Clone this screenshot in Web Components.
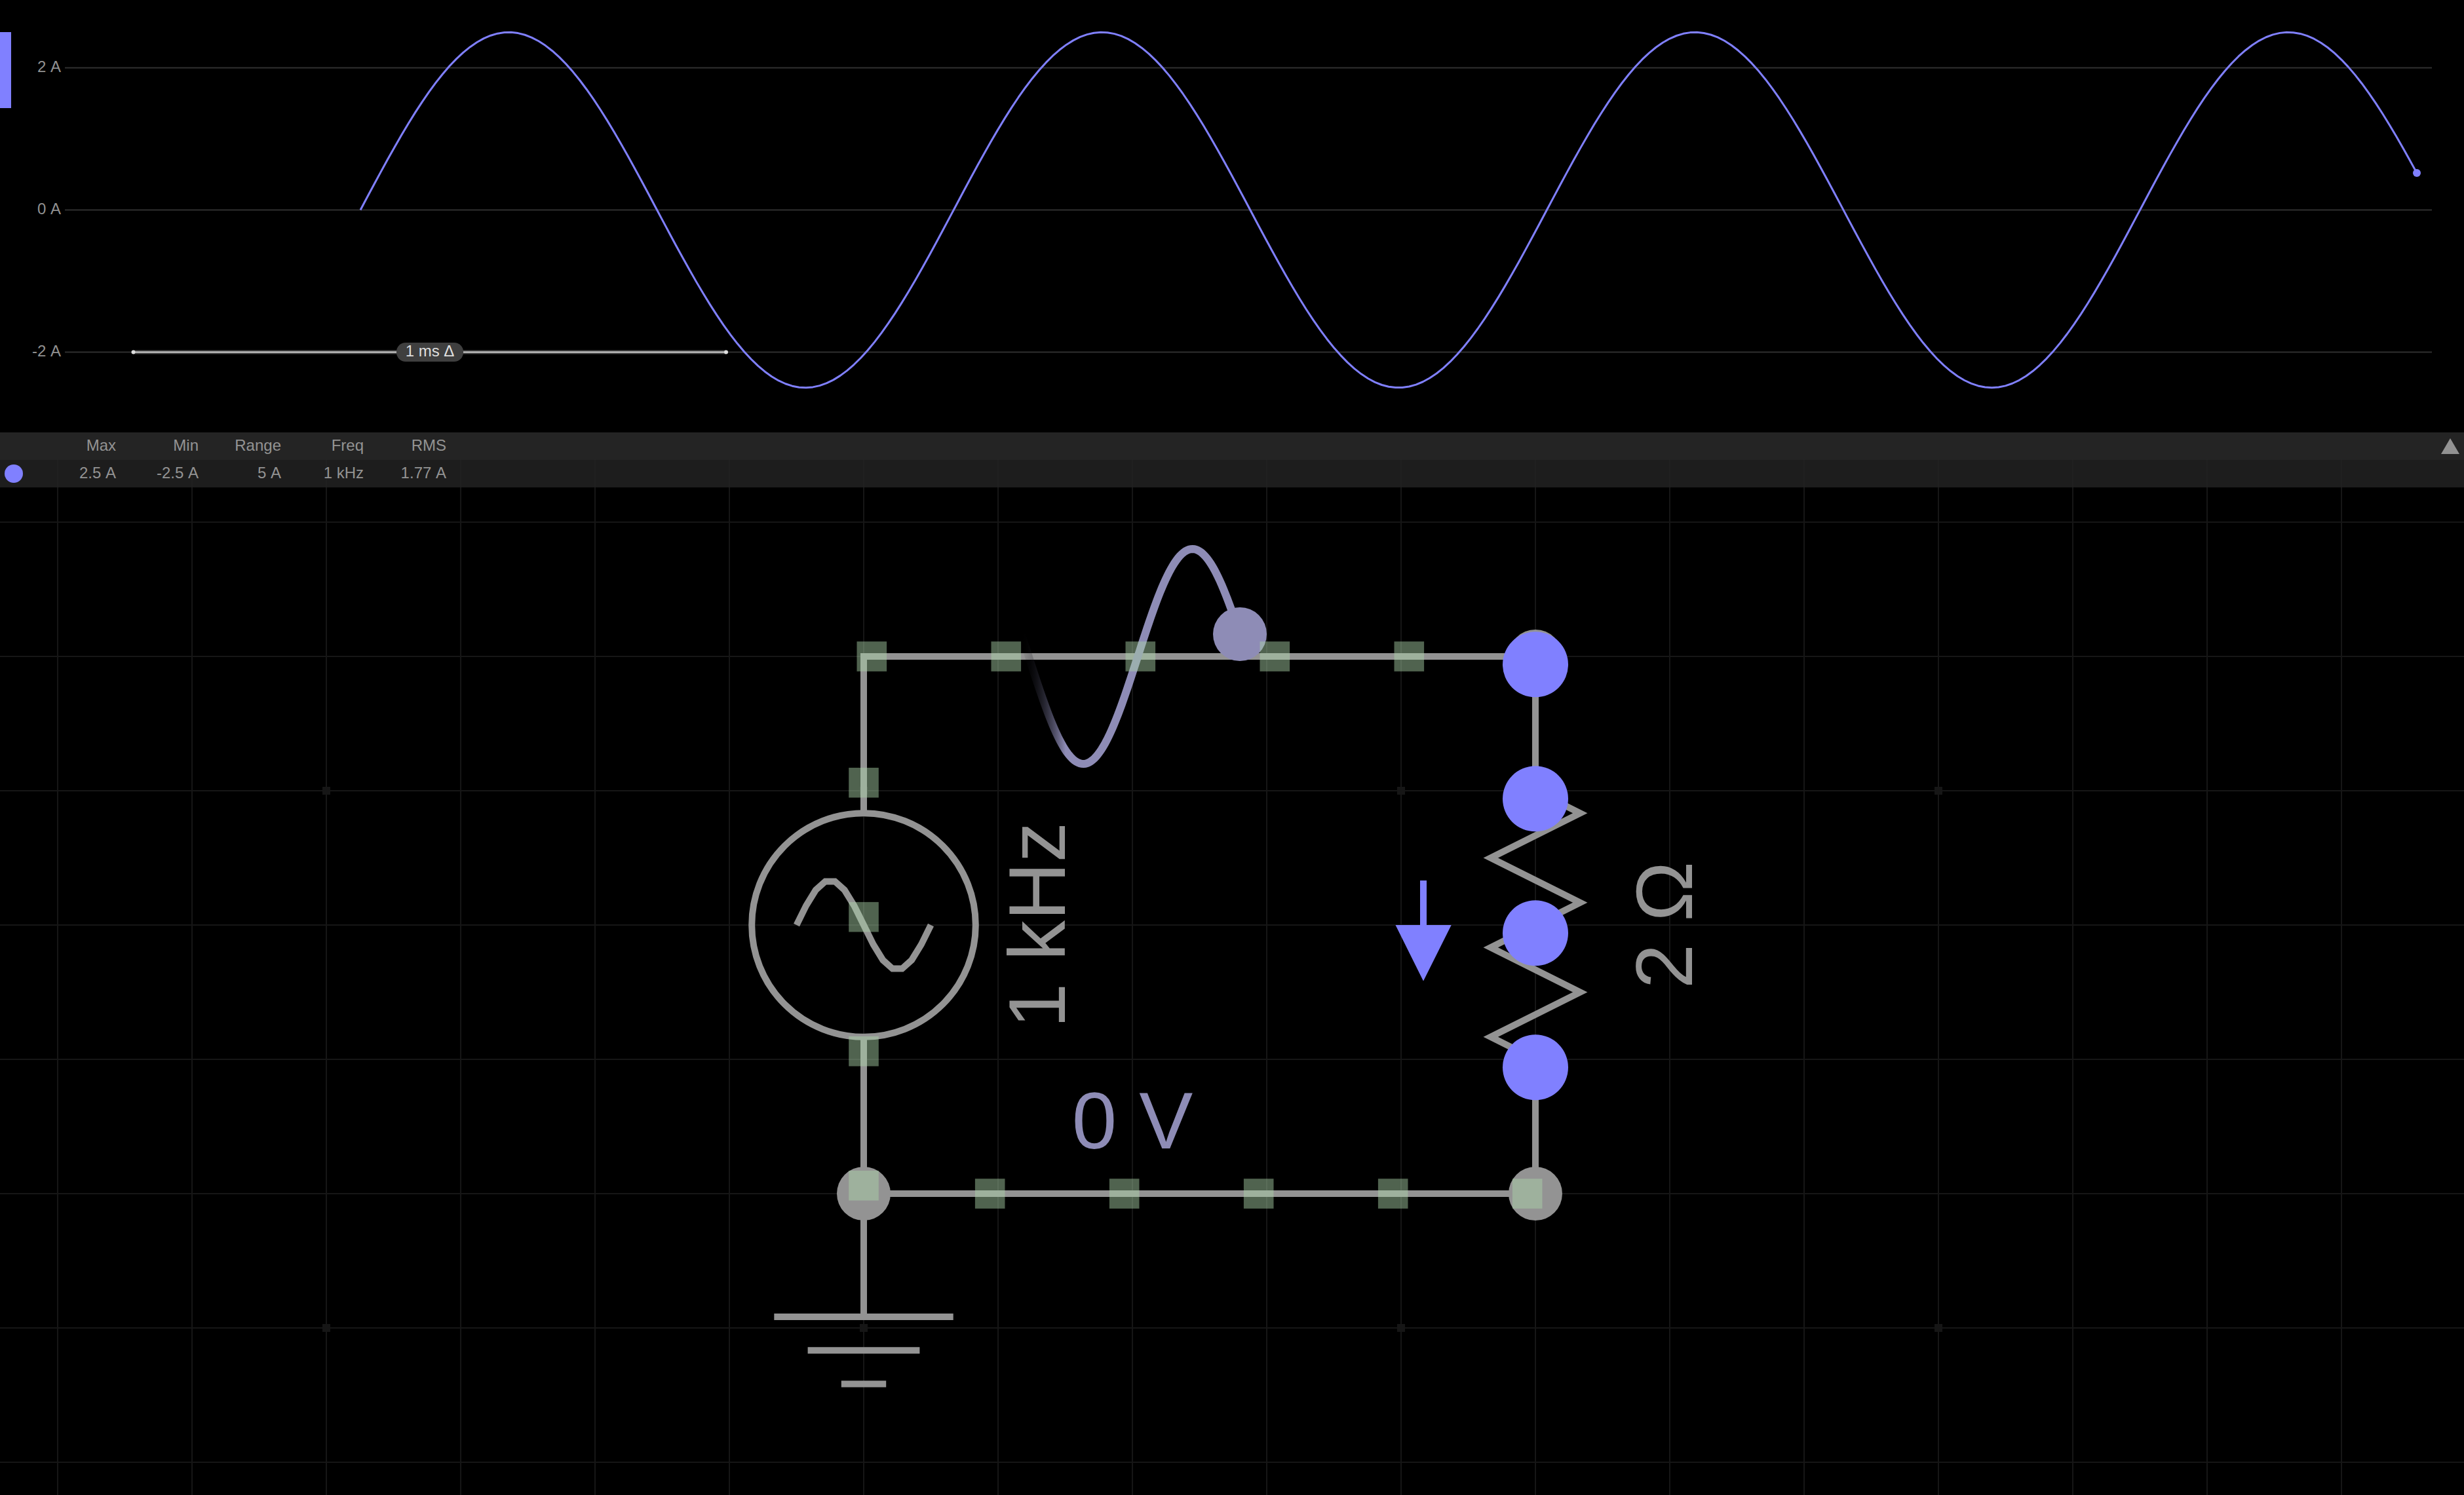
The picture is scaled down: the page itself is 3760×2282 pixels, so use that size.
<!DOCTYPE html>
<html lang="en">
<head>
<meta charset="utf-8">
<title>Circuit scope</title>
<style>
  html, body { margin: 0; background: #000; }
  body { font-family: "Liberation Sans", Arial, sans-serif; font-kerning: none; color: #939393; }
</style>
</head>
<body>
<circuit-app>
  <scope-plot slot="plot"></scope-plot>
  <measure-table slot="table"></measure-table>
  <circuit-canvas slot="canvas"></circuit-canvas>
</circuit-app>

<template id="app-tpl">
  <style>
    :host {
      display: grid;
      grid-template-columns: minmax(0, 1fr);
      grid-template-rows: auto auto 1fr;
      height: 100vh;
      overflow: hidden;
    }
    ::slotted([slot=plot]) { grid-row: 1; }
    ::slotted([slot=table]) { grid-row: 2; grid-column: 1; z-index: 1; }
    ::slotted([slot=canvas]) { grid-row: 2 / 4; grid-column: 1; }
  </style>
  <slot name="plot"></slot>
  <slot name="canvas"></slot>
  <slot name="table"></slot>
</template>

<template id="plot-tpl">
  <style>
    :host { display: block; height: 660px; }
    svg { display: block; width: 100%; height: 100%; }
    svg svg { overflow: visible; }
    text { font-size: 24px; fill: #919191; }
    .rule { fill: #303030; width: calc(100% - 148px); height: 2px; }
    .trace { fill: none; stroke: #8080ff; stroke-width: 3; stroke-linejoin: round; }
    .pill { fill: #3f3f3f; }
    .pill-text { fill: #dedede; }
  </style>
  <svg role="img" aria-label="Current over time">
    <rect x="0" y="49" width="17" height="116" fill="#8080ff"/>
    <g text-anchor="end">
      <text x="93" y="110">2 A</text>
      <text x="93" y="327">0 A</text>
      <text x="93" y="544">-2 A</text>
    </g>
    <rect class="rule" x="99" y="102.5"/>
    <rect class="rule" x="99" y="319.5"/>
    <rect class="rule" x="99" y="536.5"/>
    <svg x="100%" y="0" width="1" height="660">
      <path class="trace"/>
      <circle cx="-72" cy="264" r="6" fill="#8080ff"/>
    </svg>
    <path d="M203 537.5H1108" stroke="#484848" stroke-width="6"/>
    <path d="M203 537.5H1108" stroke="#d4d4d4" stroke-width="2"/>
    <circle cx="203.5" cy="537.5" r="3" fill="#dedede"/>
    <circle cx="1108" cy="537.5" r="3" fill="#dedede"/>
    <rect class="pill" x="605" y="523" width="102" height="29" rx="14"/>
    <text class="pill-text" x="656" y="544" text-anchor="middle">1 ms Δ</text>
  </svg>
</template>

<template id="table-tpl">
  <style>
    :host { display: block; }
    table { width: 100%; border-collapse: collapse; table-layout: fixed; font-size: 24px; line-height: 40px; }
    th, td { height: 40px; padding: 0 0 2px; text-align: right; font-weight: 400; }
    thead { background: #242424; }
    tbody { background: rgb(35 35 35 / .84); }
    .key { width: 51px; }
    .num { width: 126px; }
    .dot { display: block; width: 28px; height: 28px; margin: 2px 0 0 7px; border-radius: 50%; background: #8080ff; }
    button { display: block; margin: 2px 7px 0 auto; padding: 0; border: 0; background: none; cursor: pointer; }
    button svg { display: block; }
  </style>
  <table>
    <thead>
      <tr>
        <th class="key"></th>
        <th class="num" scope="col">Max</th>
        <th class="num" scope="col">Min</th>
        <th class="num" scope="col">Range</th>
        <th class="num" scope="col">Freq</th>
        <th class="num" scope="col">RMS</th>
        <th><button type="button" aria-label="Expand"><svg width="28" height="24"><path d="M14 0L28 24H0z" fill="#939393"/></svg></button></th>
      </tr>
    </thead>
    <tbody>
      <tr>
        <td><span class="dot"></span></td>
        <td>2.5 A</td><td>-2.5 A</td><td>5 A</td><td>1 kHz</td><td>1.77 A</td><td></td>
      </tr>
    </tbody>
  </table>
</template>

<template id="canvas-tpl">
  <style>
    :host { display: block; min-height: 0; overflow: hidden; }
    svg { display: block; width: 100%; height: 100%; }
    svg svg { overflow: visible; }
    .wire { fill: none; stroke: #939393; stroke-width: 10; }
    .node { fill: #939393; }
    .current { fill: #8080ff; }
    .charge { fill: #a9d2a8; fill-opacity: .47; }
    text { font-size: 123px; text-anchor: middle; fill: #939393; }
    .volt { fill: #8e8cb6; }
  </style>
  <svg role="img" aria-label="AC source driving a 2 ohm resistor">
    <defs>
      <pattern id="cells" x="88" y="797" width="205" height="205" patternUnits="userSpaceOnUse">
        <path d="M0 0H205M0 205H205M0 0V205M205 0V205" stroke="#161616" stroke-width="2"/>
      </pattern>
      <pattern id="marks" x="492" y="381" width="820" height="820" patternUnits="userSpaceOnUse">
        <rect width="12" height="12" y="0" fill="#161616"/>
      </pattern>
      <linearGradient id="fade" gradientUnits="userSpaceOnUse" x1="1559" y1="0" x2="1626" y2="0">
        <stop offset="0" stop-color="#000" stop-opacity="0"/>
        <stop offset="1" stop-color="#8e8cb6"/>
      </linearGradient>
    </defs>
    <svg x="50%" y="0" width="1" height="1">
      <g transform="translate(-1880 -660)">
        <rect x="-2000" y="600" width="8000" height="4000" fill="url(#cells)"/>
        <rect x="-2000" y="1100" width="8000" height="4000" fill="url(#marks)"/>

        <path class="wire" d="M1318 1242V1002H2343V1207L2411.3 1241.2L2274.7 1309.5L2411.3 1377.8L2274.7 1446.2L2411.3 1514.5L2274.7 1582.8L2343 1617V1822H1318"/>
        <path class="wire" d="M1318 1583V2010M1181.3 2010H1454.7M1232.6 2061.3H1403.4M1283.8 2112.5H1352.2"/>
        <circle class="wire" cx="1318" cy="1412" r="170.8"/>
        <path class="wire" id="source"/>
        <circle class="node" cx="2343" cy="1002" r="41"/>
        <circle class="node" cx="2343" cy="1822" r="41"/>
        <circle class="node" cx="1318" cy="1822" r="41"/>

        <path id="voltage" fill="none" stroke="url(#fade)" stroke-width="12"/>
        <circle class="volt" cx="1892" cy="968" r="41"/>

        <g id="charges"></g>

        <path class="current" d="M2167 1344H2177V1412H2214.7L2172 1497.4L2129.5 1412H2167z"/>
        <g class="current">
          <circle cx="2343" cy="1014.3" r="50"/>
          <circle cx="2343" cy="1219.3" r="50"/>
          <circle cx="2343" cy="1424.3" r="50"/>
          <circle cx="2343" cy="1629.3" r="50"/>
        </g>

        <text transform="translate(1625 1412) rotate(-90)">1 kHz</text>
        <text transform="translate(2582 1412) rotate(-90)">2 Ω</text>
        <text class="volt" x="1728" y="1753">0 V</text>
      </g>
    </svg>
  </svg>
</template>

<script>
  class TemplateElement extends HTMLElement {
    constructor() {
      super();
      this.attachShadow({ mode: "open" })
        .append(document.getElementById(this.constructor.template).content.cloneNode(true));
    }
  }

  // Samples f over [from, to] and returns the polyline as path data.
  const trace = (f, from, to, steps) => {
    let d = "";
    for (let i = 0; i <= steps; i++) {
      const x = from + (to - from) * i / steps;
      d += (i ? "L" : "M") + x.toFixed(2) + " " + f(x).toFixed(2);
    }
    return d;
  };
  const TAU = 2 * Math.PI;

  customElements.define("circuit-app", class extends TemplateElement {
    static template = "app-tpl";
  });

  customElements.define("scope-plot", class extends TemplateElement {
    static template = "plot-tpl";
    connectedCallback() {
      const start = -3210, end = -72, period = 905.2;
      this.shadowRoot.querySelector(".trace").setAttribute("d",
        trace(x => 320.5 - 271.25 * Math.sin(TAU * (x - start) / period), start, end, 300));
    }
  });

  customElements.define("measure-table", class extends TemplateElement {
    static template = "table-tpl";
  });

  customElements.define("circuit-canvas", class extends TemplateElement {
    static template = "canvas-tpl";
    connectedCallback() {
      const root = this.shadowRoot;
      root.getElementById("source").setAttribute("d",
        trace(x => 1412 - 68.3 * Math.sin(TAU * (x - 1215.5) / 205), 1215.5, 1420.5, 14));
      root.getElementById("voltage").setAttribute("d",
        trace(x => 1002 - 164 * Math.sin(TAU * (x - 1736.3) / 333.2), 1559, 1892, 120));

      const spots = [];
      for (let i = 0; i < 5; i++) {
        spots.push([1330.3 + 205 * i, 1002], [1510.7 + 205 * i, 1822]);
        if (i < 4) spots.push([1318, 1194.7 + 205 * i]);
      }
      const group = root.getElementById("charges");
      for (const [x, y] of spots) {
        const r = document.createElementNS("http://www.w3.org/2000/svg", "rect");
        r.setAttribute("class", "charge");
        r.setAttribute("x", x - 22.8);
        r.setAttribute("y", y - 22.8);
        r.setAttribute("width", 45.6);
        r.setAttribute("height", 45.6);
        group.append(r);
      }
    }
  });
</script>
</body>
</html>
